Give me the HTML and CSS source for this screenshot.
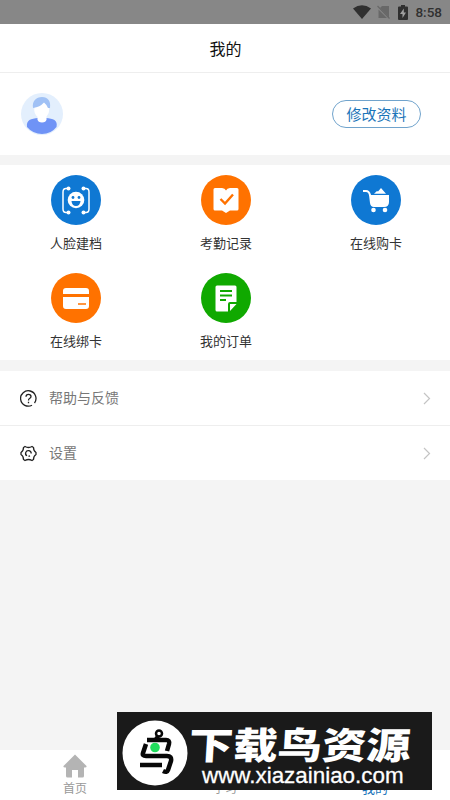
FILE: index.html
```html
<!DOCTYPE html>
<html lang="zh-CN">
<head>
<meta charset="utf-8">
<meta name="viewport" content="width=device-width, initial-scale=1">
<title>我的</title>
<link rel="stylesheet" href="styles.css">
</head>
<body>
<div class="app">
  <div class="status">
    <svg class="wifi" width="18" height="14" viewBox="0 0 18 14"><path d="M0 3.5Q9-3 18 3.5L9 14Z" fill="#303030"/></svg>
    <svg class="sim" width="13" height="14" viewBox="0 0 13 14"><path d="M5 1H12V12.5L3 3ZM1.5 4.5L10 13H1.5Z" fill="#686868"/><path d="M.5 1L12.5 13.5" stroke="#686868" stroke-width="1.2"/></svg>
    <svg class="battery" width="10" height="15" viewBox="0 0 10 15"><path d="M3 0H7V1.5H9Q10 1.5 10 2.5V14Q10 15 9 15H1Q0 15 0 14V2.5Q0 1.5 1 1.5H3Z" fill="#303030"/><path d="M5.8 3.5L2 9H4.5V13L8 7.5H5.8Z" fill="#a0a0a0"/></svg>
    <span>8:58</span>
  </div>
  <header class="title">我的</header>
  <section class="profile">
    <svg width="42" height="42" viewBox="0 0 42 42">
      <circle cx="21" cy="21" r="21" fill="#e3effd"/>
      <path d="M6 34C5 27 10 25.500 17 25H25C32 25.500 37 27 35.500 34Q30 41 21 41Q12 41 6 34Z" fill="#6f93f6"/>
      <path d="M16.500 22H25.500V26.500Q25 29.500 21 29.500Q17 29.500 16.500 26.500Z" fill="#fff"/>
      <ellipse cx="20.700" cy="17" rx="7.500" ry="8" fill="#fff"/>
      <path d="M12 15C11 8 15 4 21 4C27 4 30 8 29 15L27 15Q26 12 23 9.500Q19 14 12 15Z" fill="#a0c1f5"/>
    </svg>
    <button class="edit">修改资料</button>
  </section>
  <section class="menu">
    <div class="item">
      <svg class="icon blue" viewBox="0 0 50 50"><g fill="none" stroke="#fff" stroke-width="1.500"><path d="M18 13.500H15Q12 13.500 12 17V34Q12 37.500 15 37.500H18M32 13.500H35Q38 13.500 38 17V34Q38 37.500 35 37.500H32"/></g><g fill="#fff"><circle cx="17.500" cy="13.500" r="2"/><circle cx="17.500" cy="37.500" r="2"/><circle cx="32.500" cy="13.500" r="2"/><circle cx="32.500" cy="37.500" r="2"/><circle cx="25" cy="25" r="8.300"/></g><g fill="#0f78d3"><circle cx="22" cy="22.500" r="1.400"/><circle cx="28" cy="22.500" r="1.400"/><path d="M20.500 26H29.500Q29 31 25 31Q21 31 20.500 26Z"/></g></svg>
      <span>人脸建档</span>
    </div>
    <div class="item">
      <svg class="icon orange" viewBox="0 0 50 50"><path d="M14 13H21Q24 13 25 15.500Q26 13 29 13H36Q37.500 13 37.500 14.500V34Q37.500 35.500 36 35.500H29L25 38L21 35.500H14Q12.500 35.500 12.500 34V14.500Q12.500 13 14 13Z" fill="#fff"/><path d="M19.500 24L24 28.500L32 19.500" stroke="#ff7200" stroke-width="2.400" fill="none"/></svg>
      <span>考勤记录</span>
    </div>
    <div class="item">
      <svg class="icon blue" viewBox="0 0 50 50"><path d="M12 16H15Q18 16 19 20V21" fill="none" stroke="#fff" stroke-width="2"/><path d="M18 20H38V27Q38 32 33 32H23Q19.500 32 19 28ZM23 18.800L26 16L27 16.500L30 13L35 18.800Z" fill="#fff"/><circle cx="22.500" cy="35" r="2.300" fill="#fff"/><circle cx="34" cy="35" r="2.300" fill="#fff"/></svg>
      <span>在线购卡</span>
    </div>
    <div class="item">
      <svg class="icon orange" viewBox="0 0 50 50"><path d="M12 21V18Q12 15 15 15H35Q38 15 38 18V21ZM12 24H38V33Q38 36 35 36H15Q12 36 12 33Z" fill="#fff"/><path d="M27 31H35" stroke="#ff7200" stroke-width="1.700"/></svg>
      <span>在线绑卡</span>
    </div>
    <div class="item">
      <svg class="icon green" viewBox="0 0 50 50"><path d="M16 12.500H34Q35.500 12.500 35.500 14V29H29Q27 29 27 31V38.500H16Q14.500 38.500 14.500 37V14Q14.500 12.500 16 12.500ZM29 31H35.500L29 38Z" fill="#fff"/><path d="M19 18H31M19 22.500H31M19 27H25" stroke="#10a900" stroke-width="1.900"/></svg>
      <span>我的订单</span>
    </div>
  </section>
  <section class="list">
    <div class="row">
      <svg width="17" height="17" viewBox="0 0 17 17" fill="none" stroke="#222" stroke-width="1.300"><path d="M12 15.200A7.700 7.700 0 1 1 14.500 13"/><path d="M6 6.700Q6 4.300 8.500 4.300Q11 4.300 11 6.500Q11 7.800 9.500 8.500Q8.500 9 8.500 10.500M8.500 11.800V13.200"/></svg>
      <span>帮助与反馈</span>
      <svg class="arrow" width="8" height="13" viewBox="0 0 8 13"><path d="M1 1L6.500 6.500L1 12" fill="none" stroke="#c4c4c4" stroke-width="1.200"/></svg>
    </div>
    <div class="row">
      <svg width="17" height="17" viewBox="0 0 17 17" fill="none" stroke="#222" stroke-width="1.300"><path d="M5 1.500Q8.500 3.500 12 1.500L13.500 2.500Q13.500 6 16 7.500V9.500Q13.500 11 13.500 14.500L12 15.500Q8.500 13.500 5 15.500L3.500 14.500Q3.500 11 1 9.500V7.500Q3.500 6 3.500 2.500Z"/><path d="M7 10.800A2.800 2.800 0 1 1 11.200 8.500M8.500 11.300L10 10.800"/></svg>
      <span>设置</span>
      <svg class="arrow" width="8" height="13" viewBox="0 0 8 13"><path d="M1 1L6.500 6.500L1 12" fill="none" stroke="#c4c4c4" stroke-width="1.200"/></svg>
    </div>
  </section>
  <nav class="tabs">
    <div class="tab"><svg width="24" height="24" viewBox="0 0 24 24"><path d="M12 .5L23.500 12Q24 13.500 22 13.500H21V22Q21 23.500 19.500 23.500H15V16H9V23.500H4.500Q3 23.500 3 22V13.500H2Q0 13.500 .5 12Z" fill="#b4b4b4"/></svg><span>首页</span></div>
    <div class="tab"><span>学习</span></div>
    <div class="tab active"><span>我的</span></div>
  </nav>
  <aside class="banner">
    <svg class="logo" width="66" height="66" viewBox="0 0 66 66"><circle cx="33" cy="33" r="32.500" fill="#fff"/><g fill="none" stroke="#080808"><circle cx="37" cy="13.500" r="3" stroke-width="2.500"/><path d="M36 16L34 19" stroke-width="4"/><path d="M25 20H44Q48 20 47 24L45 31" stroke-width="4.500"/><path d="M24 24L21 33Q20 36 24 36H45Q50 36 49 41L46 50Q45 53 41 51" stroke-width="4.500"/><path d="M18 45H40" stroke-width="4.500"/></g><circle cx="33" cy="27.500" r="4.800" fill="#20dc5c"/></svg>
    <div class="words"><div class="brand">下载鸟资源</div><div class="url">www.xiazainiao.com</div></div>
  </aside>
</div>
</body>
</html>
```
FILE: styles.css
```css
* { box-sizing: border-box; }
body {
  margin: 0;
  font-family: "Noto Sans CJK SC", sans-serif;
}
.app {
  position: relative;
  width: 450px;
  height: 800px;
  overflow: hidden;
  display: flex;
  flex-direction: column;
  background: #f4f4f4;
}
.status {
  height: 24px;
  background: #878787;
  display: flex;
  align-items: center;
  justify-content: flex-end;
  padding-right: 8px;
  color: #303030;
  font: 500 13.5px/24px Roboto, sans-serif;
}
.wifi { margin-right: 6px; }
.sim { margin-right: 8px; }
.battery { margin-right: 7px; }
.title {
  height: 49px;
  background: #fff;
  border-bottom: 1px solid #eee;
  padding-left: 1px;
  text-align: center;
  font-size: 16px;
  line-height: 49px;
  color: #111;
}
.profile {
  height: 82px;
  background: #fff;
  display: flex;
  align-items: center;
  justify-content: space-between;
  padding: 0 29px 0 21px;
}
.edit {
  width: 89px;
  height: 28px;
  padding: 0;
  border: 1px solid #70a3cc;
  border-radius: 14px;
  background: #fff;
  color: #1b75b9;
  font: 15px/26px "Noto Sans CJK SC", sans-serif;
}
.menu {
  margin-top: 10px;
  height: 195px;
  padding: 10px 0 0 1px;
  background: #fff;
  display: grid;
  grid-template-columns: repeat(3, 150px);
  grid-auto-rows: 97.5px;
}
.item {
  display: flex;
  flex-direction: column;
  align-items: center;
  font-size: 13px;
  line-height: 20px;
  color: #333;
}
.icon {
  width: 50px;
  height: 50px;
  margin-bottom: 8px;
  border-radius: 50%;
}
.blue { background: #0f78d3; }
.orange { background: #ff7200; }
.green { background: #10a900; }
.list { margin-top: 11px; background: #fff; }
.row {
  height: 55px;
  display: flex;
  align-items: center;
  gap: 12px;
  padding: 0 19px 0 20px;
  color: #777;
  font-size: 14px;
  line-height: 20px;
}
.row span { padding-bottom: 2px; }
.row:first-child { border-bottom: 1px solid #eee; }
.row:last-child { height: 54px; }
.arrow { margin-left: auto; }
.tabs {
  margin-top: auto;
  height: 50px;
  background: #fff;
  display: grid;
  grid-template-columns: repeat(3, 1fr);
}
.tab {
  display: flex;
  flex-direction: column;
  align-items: center;
  justify-content: flex-end;
  padding-bottom: 2px;
  font-size: 12px;
  line-height: 20px;
  color: #999;
}
.active { color: #1b75b9; font-size: 13px; }
.banner {
  position: absolute;
  left: 117px;
  top: 712px;
  width: 315px;
  height: 78px;
  padding-left: 5px;
  background: #1a1a1a;
  display: flex;
  align-items: center;
  color: #fff;
}
.logo { margin-top: 3px; flex: none; }
.words { height: 78px; padding-top: 11px; }
.brand {
  margin-left: 1px;
  width: 190px;
  height: 41px;
  font-size: 37px;
  font-weight: 900;
  line-height: 40px;
  white-space: nowrap;
  transform: scaleX(1.2) skewX(-3deg);
  transform-origin: left center;
}
.url {
  margin-left: 14px;
  font: 22.4px/24px "Liberation Sans", sans-serif;
  -webkit-text-stroke: 0.3px #fff;
}
```
